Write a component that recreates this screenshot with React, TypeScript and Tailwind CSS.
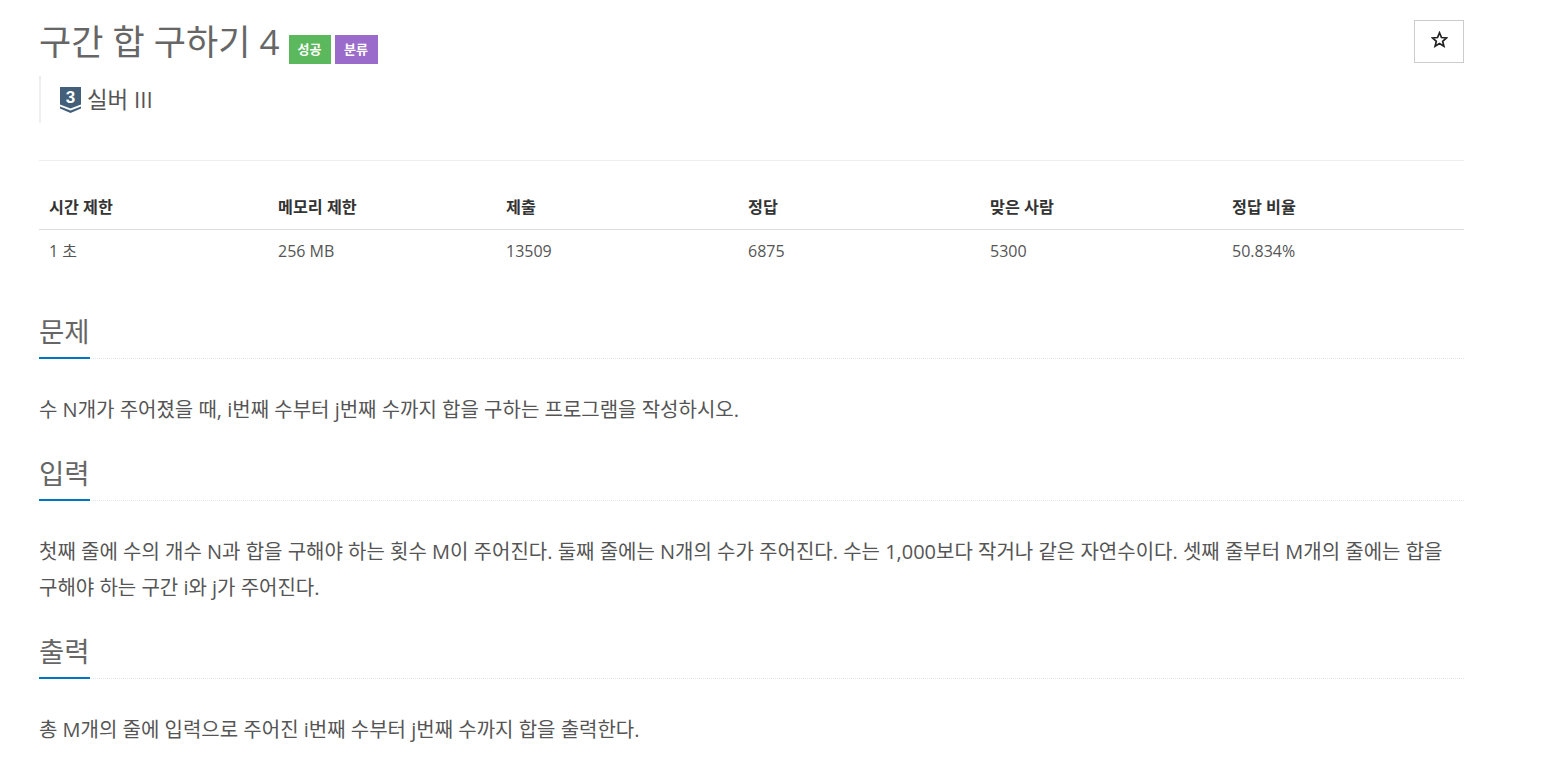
import React from 'react';

const FONT = '"Open Sans", "Noto Sans CJK KR", sans-serif';

const stats = [
  { label: '시간 제한', value: '1 초', width: 'w-[229px]' },
  { label: '메모리 제한', value: '256 MB', width: 'w-[228px]' },
  { label: '제출', value: '13509', width: 'w-[242px]' },
  { label: '정답', value: '6875', width: 'w-[242px]' },
  { label: '맞은 사람', value: '5300', width: 'w-[242px]' },
  { label: '정답 비율', value: '50.834%', width: 'w-[242px]' },
];

function Section({ title, children }: { title: string; children: React.ReactNode }) {
  return (
    <section>
      <div className="border-b border-dotted border-[#e5e5e5] h-[52px]">
        <h2 className="inline-block h-[52px] border-b-2 border-[#0076c0] pt-[7px] text-[27.500px] leading-[36px] font-normal text-[#666]">
          {title}
        </h2>
      </div>
      <div className="pt-[33px] pb-[21px] text-[20px] leading-[36px] text-[#555]">{children}</div>
    </section>
  );
}

function TierIcon() {
  return (
    <svg width="21" height="26" viewBox="0 0 21 26" className="shrink-0">
      <path d="M0 0H21V17.500L10.500 21.500L0 17.500Z" fill="#435f7a" />
      <path d="M0 19.500L10.500 23.500L21 19.500V21.500L10.500 26L0 21.500Z" fill="#435f7a" />
      <text x="10.500" y="16" textAnchor="middle" fontSize="17" fontWeight="800" fill="#fff" fontFamily="Liberation Sans">
        3
      </text>
    </svg>
  );
}

export default function App() {
  return (
    <div className="w-[1567px] h-[758px] overflow-hidden bg-white pl-[39px] pt-[20px]" style={{ fontFamily: FONT }}>
      <div className="w-[1425px]">
        {/* Header */}
        <div className="flex justify-between items-start">
          <div className="flex items-end h-[44px]">
            <h1 className="text-[35px] leading-[43px] font-normal text-[#666] self-start">구간 합 구하기 4</h1>
            <span className="ml-[9px] w-[42px] h-[29px] bg-[#5cb85c] text-white text-[13px] font-semibold flex items-center justify-center">
              성공
            </span>
            <span className="ml-[4px] w-[43px] h-[29px] bg-[#9b6bcc] text-white text-[13px] font-semibold flex items-center justify-center">
              분류
            </span>
          </div>
          <button className="w-[50px] h-[43px] border border-[#ccc] bg-white flex items-center justify-center">
            <svg width="17" height="17" viewBox="0 0 24 24" fill="none" stroke="#222" strokeWidth="2.400" className="-translate-y-[2px]">
              <path d="M12 2.500L14.800 9.200L22 9.800L16.500 14.500L18.200 21.500L12 17.700L5.800 21.500L7.500 14.500L2 9.800L9.200 9.200Z" />
            </svg>
          </button>
        </div>

        {/* Tier */}
        <div className="mt-[12px] h-[47px] border-l-2 border-[#eee] pl-[19px] flex items-center gap-[6px] text-[#555] text-[22.400px]">
          <TierIcon />
          <span className="leading-[27px]">실버 III</span>
        </div>

        <div className="mt-[37px] border-t border-[#eee]" />

        {/* Stats */}
        <div className="mt-[24px]">
          <div className="flex h-[45px] border-b border-[#ddd]">
            {stats.map(s => (
              <div key={s.label} className={`${s.width} px-[10px] pt-[12px] text-[16.200px] leading-[20px] font-bold text-[#333]`}>
                {s.label}
              </div>
            ))}
          </div>
          <div className="flex h-[44px]">
            {stats.map(s => (
              <div key={s.label} className={`${s.width} px-[10px] pt-[11px] text-[16px] leading-[20px] text-[#555]`}>
                {s.value}
              </div>
            ))}
          </div>
        </div>

        {/* Body */}
        <div className="mt-[33px]">
          <Section title="문제">
            <p>수 N개가 주어졌을 때, i번째 수부터 j번째 수까지 합을 구하는 프로그램을 작성하시오.</p>
          </Section>
          <Section title="입력">
            <p>
              첫째 줄에 수의 개수 N과 합을 구해야 하는 횟수 M이 주어진다. 둘째 줄에는 N개의 수가 주어진다. 수는 1,000보다
              작거나 같은 자연수이다. 셋째 줄부터 M개의 줄에는 합을 구해야 하는 구간 i와 j가 주어진다.
            </p>
          </Section>
          <Section title="출력">
            <p>총 M개의 줄에 입력으로 주어진 i번째 수부터 j번째 수까지 합을 출력한다.</p>
          </Section>
        </div>
      </div>
    </div>
  );
}
